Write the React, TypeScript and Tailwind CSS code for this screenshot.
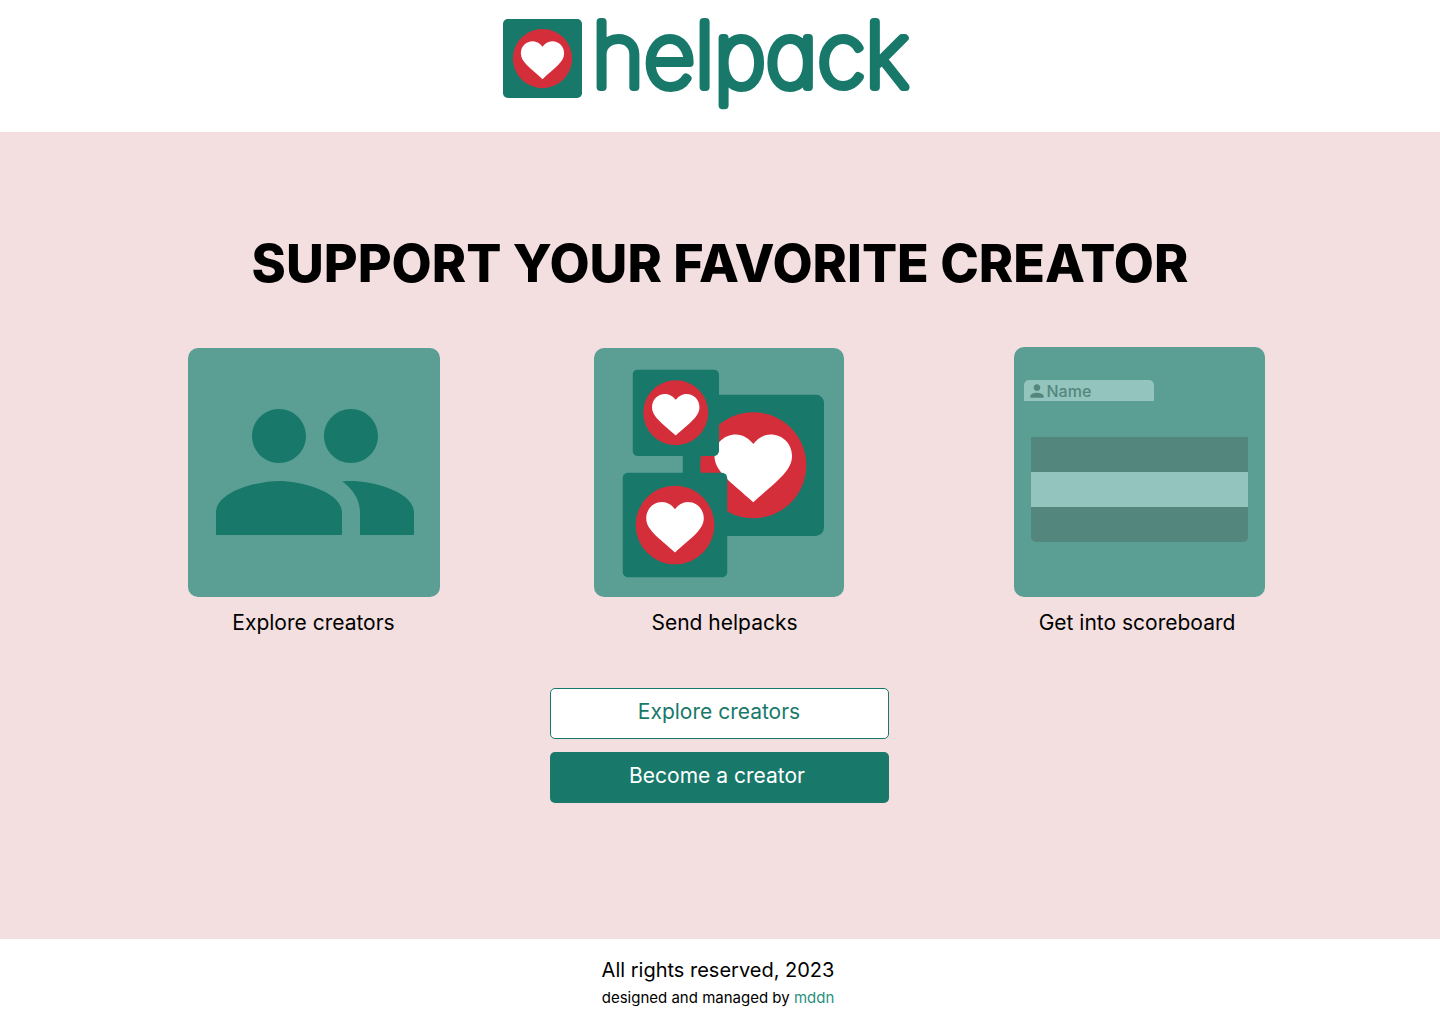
import React from "react";

function HeartPack(props: React.SVGProps<SVGSVGElement>) {
  return (
    <svg viewBox="0 0 100 100" aria-hidden="true" {...props}>
      <rect width="100" height="100" rx="6" fill="#18796b" />
      <circle cx="50" cy="50" r="37.5" fill="#d42e3a" />
      <path
        d="M50 35C47 31 42.5 28.2 37.8 28.2C29 28.2 22.6 35 22.6 43.5C22.6 54.5 34.5 62 50 76.2C65.5 62 77.4 54.5 77.4 43.5C77.4 35 71 28.2 62.2 28.2C57.5 28.2 53 31 50 35Z"
        fill="#fff"
      />
    </svg>
  );
}

function PeopleIcon() {
  return (
    <svg viewBox="0 0 24 24" className="size-[216px]" fill="#18796b" aria-hidden="true">
      <path d="M16 11c1.66 0 3-1.34 3-3s-1.34-3-3-3-3 1.34-3 3 1.34 3 3 3zm-8 0c1.66 0 3-1.34 3-3S9.66 5 8 5 5 6.34 5 8s1.34 3 3 3zm0 2c-2.33 0-7 1.17-7 3.5V19h14v-2.5c0-2.33-4.67-3.5-7-3.5zm8 0c-.29 0-.62.02-.97.05 1.16.84 1.97 1.97 1.97 3.45V19h6v-2.5c0-2.33-4.67-3.5-7-3.5z" />
    </svg>
  );
}

function PersonIcon() {
  return (
    <svg viewBox="0 0 24 24" className="size-5" fill="currentColor" aria-hidden="true">
      <path d="M12 12c2.21 0 4-1.79 4-4s-1.79-4-4-4-4 1.79-4 4 1.79 4 4 4zm0 2c-2.67 0-8 1.34-8 4v2h16v-2c0-2.66-5.33-4-8-4z" />
    </svg>
  );
}

function Logo() {
  return (
    <a href="#" aria-label="helpack" className="flex items-start gap-2.5">
      <HeartPack className="size-[79px]" />
      <svg width="326" height="113" viewBox="0 0 326 113" className="overflow-visible" aria-hidden="true">
        <text
          x="0"
          y="68"
          fill="#18796b"
          stroke="#18796b"
          strokeWidth="8"
          strokeLinejoin="round"
          className="font-['Inter'] text-[89px] font-thin [font-feature-settings:'cv11']"
        >
          helpack
        </text>
      </svg>
    </a>
  );
}

export default function App() {
  return (
    <div className="flex min-h-screen flex-col bg-[#f3dfdf] font-['Inter',sans-serif] text-black">
      <header className="flex h-[132px] justify-center bg-white pt-[19px] pr-[19px]">
        <Logo />
      </header>

      <main className="flex flex-1 flex-col items-center pt-[100px]">
        <h1 className="text-center text-[52px] leading-[64px] font-extrabold">SUPPORT YOUR FAVORITE CREATOR</h1>

        <div className="mt-[51px] flex items-end justify-center pl-3">
          <figure className="mr-[154px] w-[252px]">
            <div className="flex h-[249px] justify-center rounded-[10px] bg-[#5b9e94] pt-4 pl-0.5">
              <PeopleIcon />
            </div>
            <figcaption className="mt-3 text-center text-[21px] leading-7">Explore creators</figcaption>
          </figure>

          <figure className="mr-[170px] w-[250px]">
            <div className="h-[249px] rounded-[10px] bg-[#5b9e94]">
              <svg viewBox="0 0 250 249" className="block w-full" aria-hidden="true">
                <HeartPack x="88.5" y="46.5" width="141.5" height="141.5" />
                <HeartPack x="38.5" y="21.5" width="86.5" height="86.5" />
                <HeartPack x="28.5" y="124.5" width="105" height="105" />
              </svg>
            </div>
            <figcaption className="mt-3 pl-3 text-center text-[21px] leading-7">Send helpacks</figcaption>
          </figure>

          <figure className="w-[251px]">
            <div className="h-[250px] rounded-[10px] bg-[#5b9e94] pt-[33px]">
              <div className="ml-[10px] flex h-[21px] w-[130px] items-center rounded-t-[5px] bg-[#93c4bd] pl-[3px] text-[16px] font-medium text-[#53877e]">
                <PersonIcon />
                <span>Name</span>
              </div>
              <div className="mx-[17px] mt-9 overflow-hidden rounded-b-[5px]">
                <div className="h-[35px] bg-[#53877e]" />
                <div className="h-[35px] bg-[#93c4bd]" />
                <div className="h-[35px] bg-[#53877e]" />
              </div>
            </div>
            <figcaption className="mt-3 pr-1 text-center text-[21px] leading-7">Get into scoreboard</figcaption>
          </figure>
        </div>

        <div className="mt-[51px] mr-0.5 flex w-[339px] flex-col gap-[13px] text-[21px]">
          <button type="button" className="h-[51px] rounded-[5px] border border-[#18796b] bg-white pb-1 text-[#18796b]">
            Explore creators
          </button>
          <button type="button" className="h-[51px] rounded-[5px] bg-[#18796b] pr-1 pb-1 text-white">
            Become a creator
          </button>
        </div>
      </main>

      <footer className="h-[85px] bg-white pt-[17px] pr-1 text-center">
        <p className="text-[20px] leading-7">All rights reserved, 2023</p>
        <p className="mt-1 text-[15px] leading-5">
          designed and managed by{" "}
          <a href="#" className="text-[#2a8f7f]">
            mddn
          </a>
        </p>
      </footer>
    </div>
  );
}
